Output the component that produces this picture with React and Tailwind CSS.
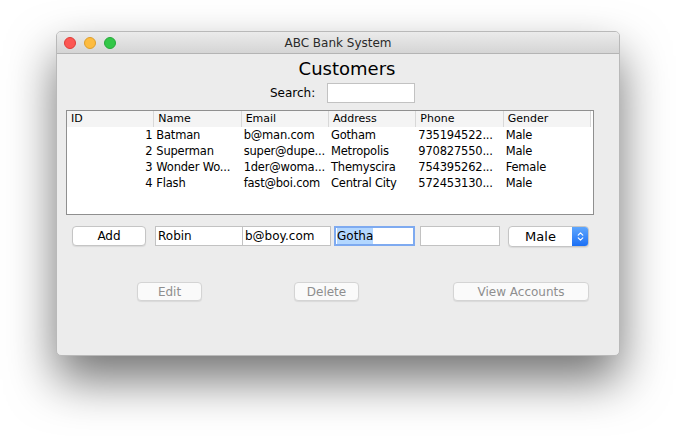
import { ChevronsUpDown } from 'lucide-react';

const FONT = "font-['DejaVu_Sans',_'Liberation_Sans',_sans-serif]";

const columns = ['ID', 'Name', 'Email', 'Address', 'Phone', 'Gender'];

const rows = [
  ['1', 'Batman', 'b@man.com', 'Gotham', '735194522...', 'Male'],
  ['2', 'Superman', 'super@dupe...', 'Metropolis', '970827550...', 'Male'],
  ['3', 'Wonder Wo...', '1der@woma...', 'Themyscira', '754395262...', 'Female'],
  ['4', 'Flash', 'fast@boi.com', 'Central City', '572453130...', 'Male'],
];

const TrafficLights = () => (
  <div className="flex items-center gap-[8px]">
    <span className="w-[12px] h-[12px] rounded-full bg-[#fc5753] border border-[#df3d38]" />
    <span className="w-[12px] h-[12px] rounded-full bg-[#fdbc40] border border-[#de9f2c]" />
    <span className="w-[12px] h-[12px] rounded-full bg-[#33c748] border border-[#27a93a]" />
  </div>
);

const PushButton = ({ label, disabled, className = '' }) => (
  <button
    className={`h-[19px] rounded-[4px] border bg-[#fafafa] text-[12px] leading-none shadow-[0_1px_1px_rgba(0,0,0,0.08)] ${
      disabled ? 'border-[#d4d4d4] text-[#8e8e8e]' : 'bg-white border-[#c5c5c5] text-black'
    } ${className}`}
  >
    {label}
  </button>
);

export default function App() {
  return (
    <div className={`w-[676px] h-[436px] bg-white pl-[56px] pt-[31px] ${FONT}`}>
      <div className="w-[564px] h-[325px] rounded-[5px] bg-[#ececec] border border-[#b9b9b9] shadow-[0_24px_48px_rgba(0,0,0,0.55)] overflow-hidden flex flex-col">
        {/* title bar */}
        <div className="h-[22px] shrink-0 relative flex items-center px-[7px] bg-gradient-to-b from-[#ebebeb] to-[#d5d5d5] border-b border-[#b4b4b4]">
          <TrafficLights />
          <div className="absolute inset-0 flex items-center justify-center text-[12px] text-[#2a2a2a]">
            ABC Bank System
          </div>
        </div>

        {/* body */}
        <div className="flex-1 flex flex-col px-[9px]">
          <div className="text-center text-[18px] leading-none text-black mt-[6px] pl-[18px]">Customers</div>
          <div className="flex items-center ml-[204px] mt-[5px] h-[20px]">
            <span className="text-[12px] text-black w-[57px]">Search:</span>
            <div className="w-[88px] h-[20px] bg-white border border-[#c2c2c2]" />
          </div>

          {/* table */}
          <div className="mt-[7px] w-[528px] h-[105px] bg-white border border-[#8f8f8f] pr-[2px]">
            <div className="grid grid-cols-6 h-[16px] bg-[#f4f4f4] text-[11px] text-black">
              {columns.map((c) => (
                <div key={c} className="pl-[4px] leading-[16px] border-r border-[#d8d8d8]">
                  {c}
                </div>
              ))}
            </div>
            {rows.map((r) => (
              <div key={r[0]} className="grid grid-cols-6 h-[16px] text-[11.5px] tracking-[-0.2px] text-black leading-[16px]">
                <div className="text-right pr-[2px]">{r[0]}</div>
                {r.slice(1).map((v, i) => (
                  <div key={i} className="pl-[2px] whitespace-nowrap">
                    {v}
                  </div>
                ))}
              </div>
            ))}
          </div>

          {/* entry row */}
          <div className="flex items-center mt-[10px] h-[22px] text-[12px] text-black">
            <PushButton label="Add" className="w-[74px] ml-[6px] h-[20px]" />
            <div className="ml-[9px] w-[88px] h-[20px] bg-white border border-[#c2c2c2] pl-[2px] leading-[18px]">Robin</div>
            <div className="w-[88px] h-[20px] bg-white border border-[#c2c2c2] border-l-0 pl-[2px] leading-[18px]">b@boy.com</div>
            <div className="ml-[3px] w-[81px] h-[20px] bg-white border-2 border-[#7eaaf0] pl-[1px] leading-[16px] flex items-center">
              <span className="bg-[#b3d7ff] h-[16px]">Gotha</span>
            </div>
            <div className="ml-[5px] w-[80px] h-[20px] bg-white border border-[#c2c2c2]" />
            <div className="ml-[8px] w-[81px] h-[21px] flex rounded-[4px] border border-[#c5c5c5] bg-white overflow-hidden shadow-[0_1px_1px_rgba(0,0,0,0.08)]">
              <div className="flex-1 text-center leading-[19px] text-[13px]">Male</div>
              <div className="w-[16px] bg-gradient-to-b from-[#5ea6fd] to-[#1a6ff5] flex items-center justify-center">
                <ChevronsUpDown className="w-[11px] h-[11px] text-white" strokeWidth={2.5} />
              </div>
            </div>
          </div>

          {/* bottom buttons */}
          <div className="flex items-center mt-[35px]">
            <PushButton label="Edit" disabled className="ml-[71px] w-[65px]" />
            <PushButton label="Delete" disabled className="ml-[92px] w-[65px]" />
            <PushButton label="View Accounts" disabled className="ml-[94px] w-[136px]" />
          </div>
        </div>
      </div>
    </div>
  );
}
